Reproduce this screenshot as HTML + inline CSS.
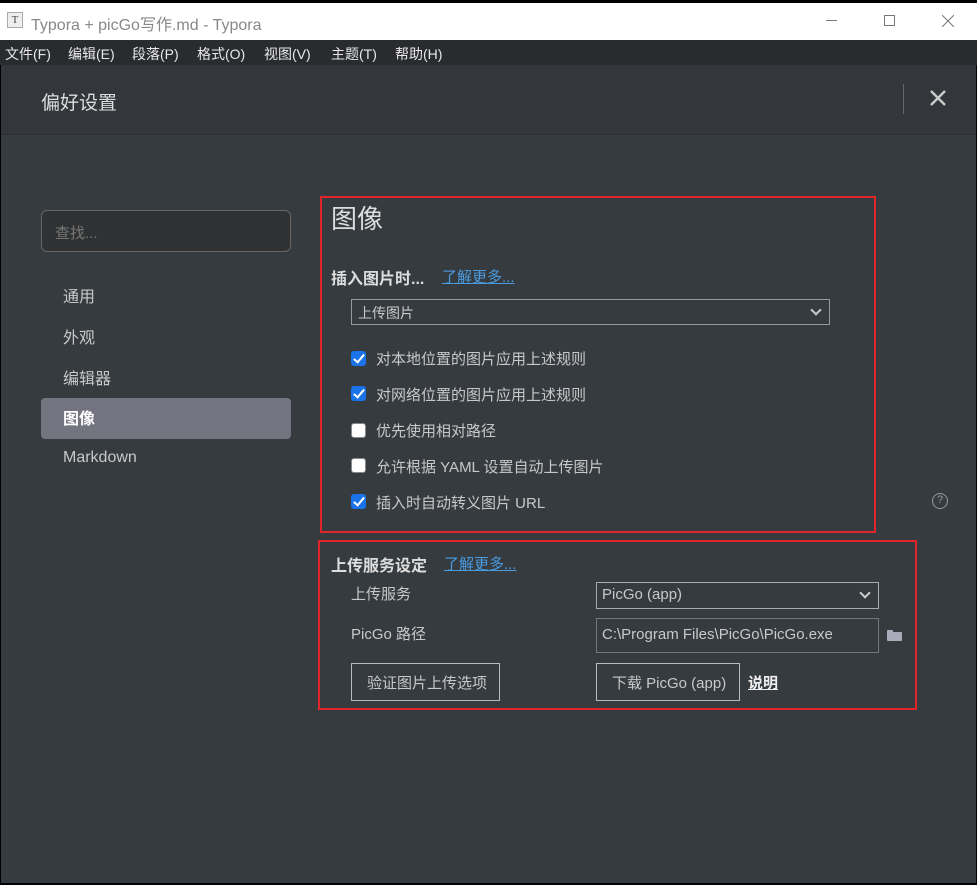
<!DOCTYPE html>
<html><head><meta charset="utf-8"><style>
*{margin:0;padding:0;box-sizing:border-box}
body{width:977px;height:885px;background:#000;font-family:"Liberation Sans","Noto Sans CJK SC",sans-serif;position:relative;overflow:hidden}
.a{position:absolute}
.t{color:#c8c8c8;font-size:15px;white-space:nowrap}
.cb{position:absolute;width:15px;height:15px;border-radius:3px}
.on{background:#1a73e8}
.on:after{content:"";position:absolute;left:5px;top:1px;width:4px;height:9px;border:solid #fff;border-width:0 2.5px 2.5px 0;transform:rotate(40deg)}
.off{background:#fff;border:1px solid #888}
.link{color:#4a9be0;text-decoration:underline;font-size:15px}
.m{position:absolute;top:44px;font-size:14px;color:#e8e8e8;white-space:nowrap}
</style></head><body>
<div class="a" style="left:0;top:3px;width:977px;height:37px;background:#fff"></div>
<div class="a" style="left:7px;top:12px;width:16px;height:16px;border:1px solid #aaa;background:#eee;font:11px 'Liberation Serif',serif;text-align:center;line-height:14px;color:#444">T</div>
<div class="a" style="left:31px;top:11px;font-size:16px;color:#888">Typora + picGo写作.md - Typora</div>
<div class="a" style="left:826px;top:20px;width:11px;height:1px;background:#777"></div>
<div class="a" style="left:884px;top:15px;width:11px;height:11px;border:1px solid #777"></div>
<svg class="a" style="left:942px;top:15px" width="12" height="12"><path d="M0 0L12 12M12 0L0 12" stroke="#777" stroke-width="1"/></svg>
<div class="a" style="left:0;top:40px;width:977px;height:25px;background:#292b2f"></div>
<div class="m" style="left:5px">文件(F)</div>
<div class="m" style="left:68px">编辑(E)</div>
<div class="m" style="left:132px">段落(P)</div>
<div class="m" style="left:197px">格式(O)</div>
<div class="m" style="left:264px">视图(V)</div>
<div class="m" style="left:331px">主题(T)</div>
<div class="m" style="left:395px">帮助(H)</div>
<div class="a" style="left:1px;top:65px;width:975px;height:818px;background:#363b40"></div>
<div class="a" style="left:1px;top:65px;width:975px;height:70px;background:#33373c;border-bottom:1px solid #2d3135"></div>
<div class="a" style="left:41px;top:88px;font-size:19px;color:#ddd">偏好设置</div>
<div class="a" style="left:903px;top:84px;width:1px;height:30px;background:#666"></div>
<svg class="a" style="left:930px;top:90px" width="16" height="16"><path d="M1 1L15 15M15 1L1 15" stroke="#ccc" stroke-width="2.4"/></svg>
<div class="a" style="left:41px;top:210px;width:250px;height:42px;background:#2f3133;border:1px solid #666;border-radius:6px"></div>
<div class="a" style="left:55px;top:222px;font-size:15px;color:#777">查找...</div>
<div class="a t" style="left:63px;top:283px;font-size:16px">通用</div>
<div class="a t" style="left:63px;top:324px;font-size:16px">外观</div>
<div class="a t" style="left:63px;top:365px;font-size:16px">编辑器</div>
<div class="a" style="left:41px;top:398px;width:250px;height:41px;background:#747480;border-radius:4px"></div>
<div class="a t" style="left:63px;top:405px;font-size:16px;color:#fff;font-weight:bold">图像</div>
<div class="a t" style="left:63px;top:449px;font-size:16px">Markdown</div>
<div class="a" style="left:320px;top:196px;width:556px;height:337px;border:2px solid #e0252b"></div>
<div class="a" style="left:331px;top:199px;font-size:26px;color:#ddd">图像</div>
<div class="a t" style="left:331px;top:265px;font-weight:bold;color:#ddd;font-size:16px">插入图片时...</div>
<div class="a link" style="left:442px;top:266px">了解更多...</div>
<div class="a" style="left:351px;top:299px;width:479px;height:26px;border:1px solid #999"></div>
<div class="a t" style="left:358px;top:303px;font-size:14px">上传图片</div>
<div class="a" style="left:812px;top:306px;width:8px;height:8px;border:solid #ccc;border-width:0 2px 2px 0;transform:rotate(45deg)"></div>
<div class="cb on" style="left:351px;top:351px"></div><div class="a t" style="left:376px;top:348px">对本地位置的图片应用上述规则</div>
<div class="cb on" style="left:351px;top:386px"></div><div class="a t" style="left:376px;top:384px">对网络位置的图片应用上述规则</div>
<div class="cb off" style="left:351px;top:423px"></div><div class="a t" style="left:376px;top:420px">优先使用相对路径</div>
<div class="cb off" style="left:351px;top:458px"></div><div class="a t" style="left:376px;top:456px">允许根据 YAML 设置自动上传图片</div>
<div class="cb on" style="left:351px;top:494px"></div><div class="a t" style="left:376px;top:492px">插入时自动转义图片 URL</div>
<div class="a" style="left:932px;top:493px;width:16px;height:16px;border:1.5px solid #999;border-radius:50%;color:#999;font-size:11px;text-align:center;line-height:13px">?</div>
<div class="a" style="left:318px;top:540px;width:599px;height:170px;border:2px solid #e0252b"></div>
<div class="a t" style="left:331px;top:552px;font-weight:bold;color:#ddd;font-size:16px">上传服务设定</div>
<div class="a link" style="left:444px;top:553px">了解更多...</div>
<div class="a t" style="left:351px;top:583px">上传服务</div>
<div class="a t" style="left:351px;top:623px">PicGo 路径</div>
<div class="a" style="left:596px;top:582px;width:283px;height:27px;border:1px solid #aaa"></div>
<div class="a t" style="left:602px;top:586px">PicGo (app)</div>
<div class="a" style="left:861px;top:589px;width:8px;height:8px;border:solid #ccc;border-width:0 2px 2px 0;transform:rotate(45deg)"></div>
<div class="a" style="left:596px;top:618px;width:283px;height:35px;border:1px solid #777"></div>
<div class="a t" style="left:602px;top:626px">C:\Program Files\PicGo\PicGo.exe</div>
<div class="a" style="left:887px;top:630px;width:6px;height:3px;background:#aab;border-radius:1px 1px 0 0"></div>
<div class="a" style="left:887px;top:632px;width:15px;height:9px;background:#aab;border-radius:1px"></div>
<div class="a" style="left:351px;top:663px;width:149px;height:38px;border:1px solid #bbb"></div>
<div class="a t" style="left:367px;top:672px">验证图片上传选项</div>
<div class="a" style="left:596px;top:663px;width:144px;height:38px;border:1px solid #bbb"></div>
<div class="a t" style="left:612px;top:672px">下载 PicGo (app)</div>
<div class="a t" style="left:748px;top:672px;text-decoration:underline;color:#eee;font-weight:bold">说明</div>
</body></html>
